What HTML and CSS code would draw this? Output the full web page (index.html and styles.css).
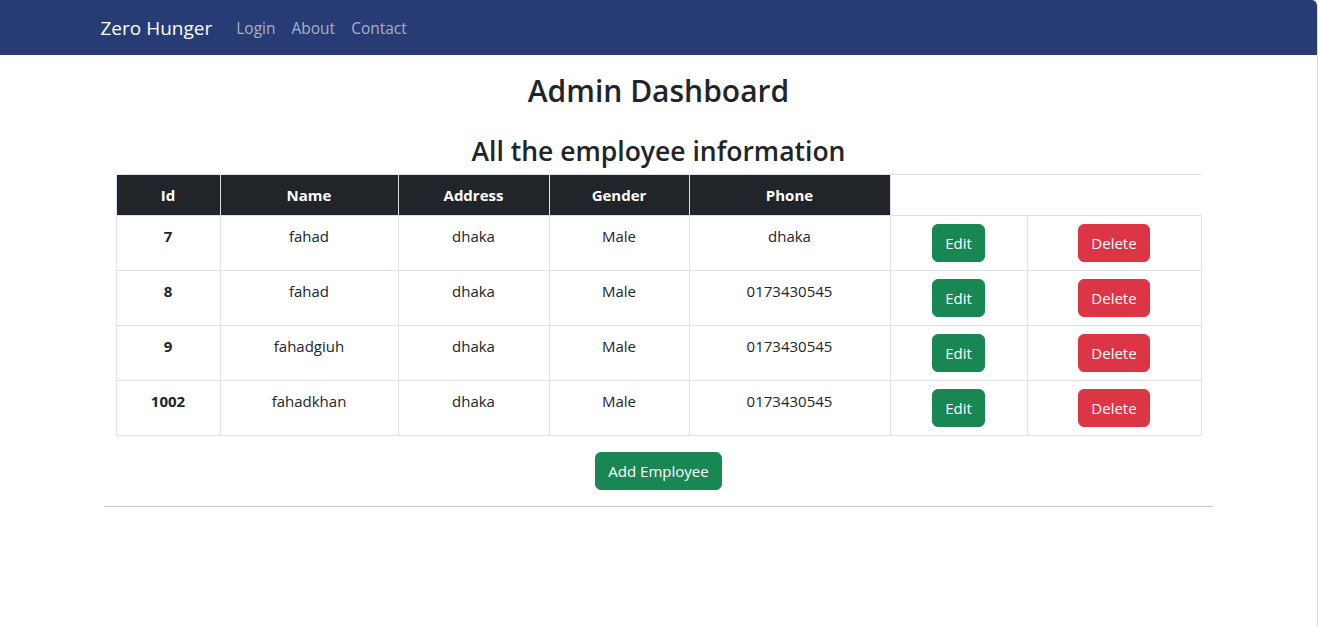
FILE: index.html
```html
<!DOCTYPE html>
<html lang="en">
<head>
<meta charset="utf-8">
<title>Admin Dashboard - Zero Hunger</title>
<link rel="stylesheet" href="styles.css">
</head>
<body>
<div class="window">
  <nav class="navbar">
    <div class="nav-container">
      <a class="brand" href="#">Zero Hunger</a>
      <ul class="nav-links">
        <li><a href="#">Login</a></li>
        <li><a href="#">About</a></li>
        <li><a href="#">Contact</a></li>
      </ul>
    </div>
  </nav>
  <main class="container">
    <h2 class="title">Admin Dashboard</h2>
    <h3 class="subtitle">All the employee information</h3>
    <table class="emp-table">
      <colgroup>
        <col class="c-id"><col class="c-name"><col class="c-addr"><col class="c-gender"><col class="c-phone"><col class="c-edit"><col class="c-del">
      </colgroup>
      <thead>
        <tr>
          <th>Id</th><th>Name</th><th>Address</th><th>Gender</th><th>Phone</th>
        </tr>
      </thead>
      <tbody>
        <tr>
          <th>7</th><td>fahad</td><td>dhaka</td><td>Male</td><td>dhaka</td>
          <td><a class="btn btn-green" href="#">Edit</a></td>
          <td><a class="btn btn-red" href="#">Delete</a></td>
        </tr>
        <tr>
          <th>8</th><td>fahad</td><td>dhaka</td><td>Male</td><td>0173430545</td>
          <td><a class="btn btn-green" href="#">Edit</a></td>
          <td><a class="btn btn-red" href="#">Delete</a></td>
        </tr>
        <tr>
          <th>9</th><td>fahadgiuh</td><td>dhaka</td><td>Male</td><td>0173430545</td>
          <td><a class="btn btn-green" href="#">Edit</a></td>
          <td><a class="btn btn-red" href="#">Delete</a></td>
        </tr>
        <tr>
          <th>1002</th><td>fahadkhan</td><td>dhaka</td><td>Male</td><td>0173430545</td>
          <td><a class="btn btn-green" href="#">Edit</a></td>
          <td><a class="btn btn-red" href="#">Delete</a></td>
        </tr>
      </tbody>
    </table>
    <div class="actions">
      <a class="btn btn-green" href="#">Add Employee</a>
    </div>
    <hr class="rule">
  </main>
</div>
</body>
</html>
```

FILE: styles.css
```css
* { box-sizing: border-box; }
html, body { margin: 0; padding: 0; background: #fff; }
body {
  font-family: "Open Sans", "Noto Sans", "Liberation Sans", sans-serif;
  font-size: 15px;
  line-height: 1.6;
  color: #212529;
}
a { text-decoration: none; }

.window {
  width: 1318px;
  min-height: 626px;
  border-right: 1px solid #dcdcdc;
  border-top-right-radius: 6px;
  overflow: hidden;
}

.navbar {
  background: #273b74;
  height: 55px;
  display: flex;
  align-items: center;
}
.nav-container {
  width: 1140px;
  margin: 0 auto;
  padding: 0 12px;
  display: flex;
  align-items: center;
}
.brand {
  color: #fff;
  font-size: 19px;
  line-height: 30px;
  padding: 5px 0;
  margin-right: 16px;
}
.nav-links {
  list-style: none;
  margin: 0;
  padding: 0;
  display: flex;
}
.nav-links a {
  display: block;
  padding: 8px;
  color: rgba(255, 255, 255, 0.6);
  font-size: 15.5px;
  line-height: 24px;
}

.container {
  width: 1140px;
  margin: 0 auto;
  padding: 0 12px;
  display: flex;
  flex-direction: column;
}
.title {
  margin: 17px 0 0;
  font-size: 30px;
  font-weight: 600;
  line-height: 38px;
  text-align: center;
}
.subtitle {
  margin: 24px 0 6px;
  font-size: 26.5px;
  font-weight: 600;
  line-height: 34px;
  text-align: center;
}

.emp-table {
  width: 1085px;
  margin: 0 auto;
  border-collapse: collapse;
  table-layout: fixed;
  vertical-align: top;
}
.c-id { width: 104px; }
.c-name { width: 178px; }
.c-addr { width: 151px; }
.c-gender { width: 140px; }
.c-phone { width: 201px; }
.c-edit { width: 137px; }
.c-del { width: 174px; }

.emp-table tr {
  border-top: 1px solid #dee2e6;
  border-bottom: 1px solid #dee2e6;
}
.emp-table th,
.emp-table td {
  border-left: 1px solid #dee2e6;
  border-right: 1px solid #dee2e6;
  padding: 8px;
  text-align: center;
  vertical-align: top;
  line-height: 24px;
}
.emp-table th { font-weight: 700; }
.emp-table thead th {
  background: #212529;
  color: #fff;
}

.btn {
  display: inline-block;
  padding: 6px 12px;
  border: 1px solid transparent;
  border-radius: 6px;
  font-size: 15px;
  line-height: 24px;
  color: #fff;
}
.btn-green { background: #198754; border-color: #198754; }
.btn-red { background: #dc3545; border-color: #dc3545; }

.actions {
  display: flex;
  justify-content: center;
  margin-top: 16px;
}
.rule {
  width: 1109px;
  margin: 16px auto 0;
  border: 0;
  border-top: 1px solid #c8c9ca;
}
```
